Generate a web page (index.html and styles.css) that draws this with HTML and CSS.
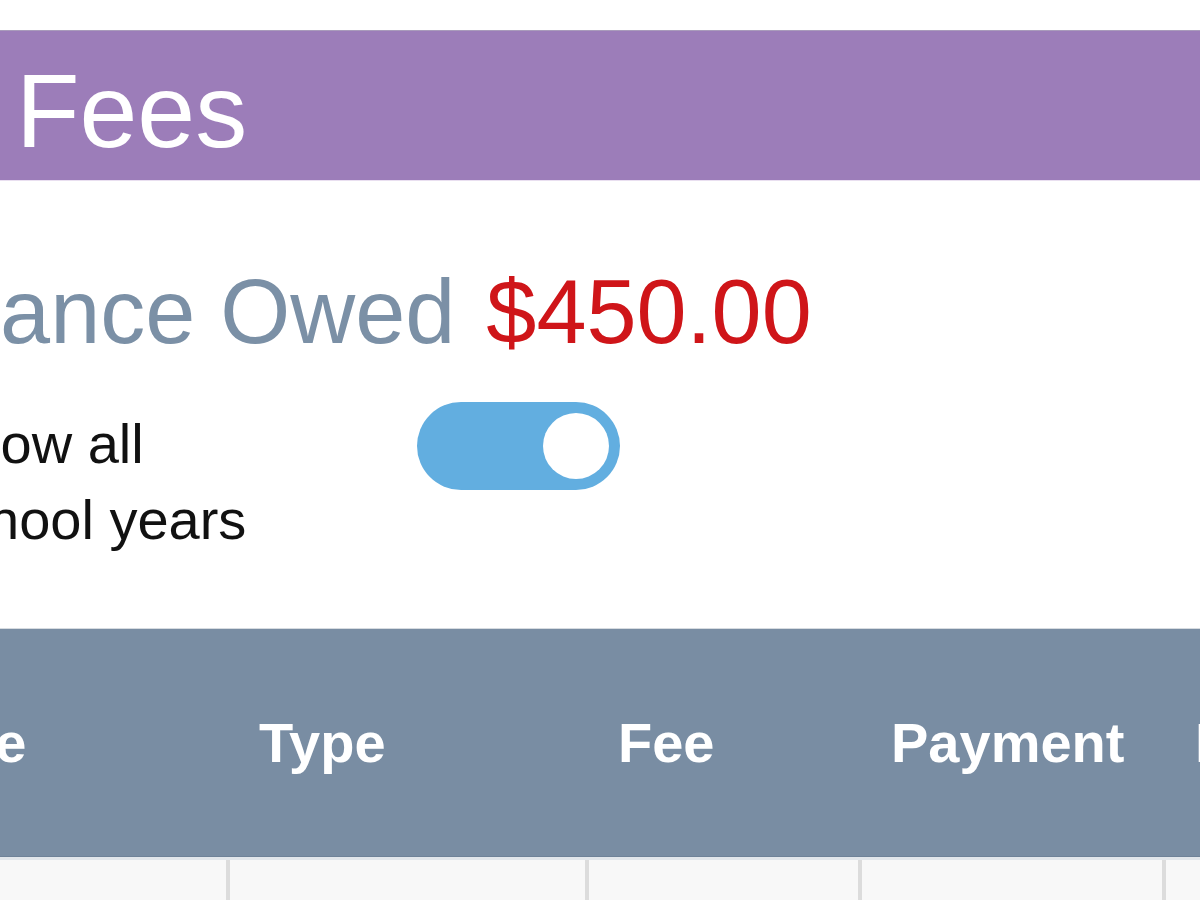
FILE: index.html
```html
<!DOCTYPE html>
<html>
<head>
  <title>Fees</title>
  <link rel="stylesheet" href="styles.css">
</head>
<body>
  <div class="page">
    <div class="title-bar">
      <h1 class="title">Fees</h1>
    </div>

    <div class="summary">
      <p class="balance">Balance Owed <span class="amount">$450.00</span></p>
      <div class="toggle-row">
        <label class="toggle-label" for="all-years">Show all<br>school years</label>
        <div class="toggle on" id="all-years">
          <span class="knob"></span>
        </div>
      </div>
    </div>

    <div class="fees-table">
      <div class="head-row">
        <div class="cell first">Date</div>
        <div class="cell">Type</div>
        <div class="cell">Fee</div>
        <div class="cell">Payment</div>
        <div class="cell">Balance</div>
      </div>
      <div class="body-row">
        <div class="cell first"></div>
        <div class="cell"></div>
        <div class="cell"></div>
        <div class="cell"></div>
        <div class="cell"></div>
      </div>
    </div>
  </div>
</body>
</html>
```

FILE: styles.css
```css
body {
  margin: 0;
  padding: 0;
  background-color: #ffffff;
  font-family: "Liberation Sans", Arial, sans-serif;
  overflow: hidden;
  height: 900px;
}

/* the view is a zoomed crop, so the page runs off the left edge */
.page {
  margin-left: -140px;
  width: 1480px;
  padding-top: 30px;
}

.title-bar {
  background-color: #9c7db9;
  border-top: 1px solid #a99bbb;
  border-bottom: 1px solid #e9dff0;
  padding: 22px 0 11px 156px;
}

.title {
  margin: 0;
  font-size: 104px;
  font-weight: normal;
  line-height: 116px;
  color: #ffffff;
}

.summary {
  padding: 81px 0 70px 10px;
}

.balance {
  margin: 0;
  font-size: 90px;
  line-height: 100px;
  color: #7b90a6;
}

.amount {
  margin-left: 6px;
  color: #cf1519;
}

.toggle-row {
  display: flex;
  align-items: flex-start;
  margin-top: 40px;
  padding-left: 62px;
}

.toggle-label {
  display: block;
  width: 485px;
  margin-top: 4px;
  font-size: 56px;
  line-height: 76px;
  color: #111111;
}

.toggle {
  width: 203px;
  height: 88px;
  border-radius: 44px;
  background-color: #62aee0;
  display: flex;
  align-items: center;
  justify-content: flex-end;
  padding: 0 11px;
  box-sizing: border-box;
}

.knob {
  width: 66px;
  height: 66px;
  border-radius: 50%;
  background-color: #ffffff;
}

.fees-table {
  border-top: 1px solid #d6dbe0;
}

.head-row,
.body-row {
  display: grid;
  grid-template-columns: 366px 359px 273px 304px 1fr;
}

.head-row {
  height: 227px;
  background-color: #798da3;
  border-bottom: 1px solid #6e8298;
}

.head-row .cell {
  display: flex;
  align-items: center;
  padding-left: 29px;
  border-left: 4px solid transparent;
  font-size: 56px;
  font-weight: bold;
  color: #ffffff;
}

.head-row .cell.first {
  padding-left: 45px;
  border-left: none;
}

.body-row {
  height: 80px;
  background-color: #f8f8f8;
  border-top: 3px solid #e1e6eb;
}

.body-row .cell {
  border-left: 4px solid #dcdcdc;
}

.body-row .cell.first {
  border-left: none;
}
```
